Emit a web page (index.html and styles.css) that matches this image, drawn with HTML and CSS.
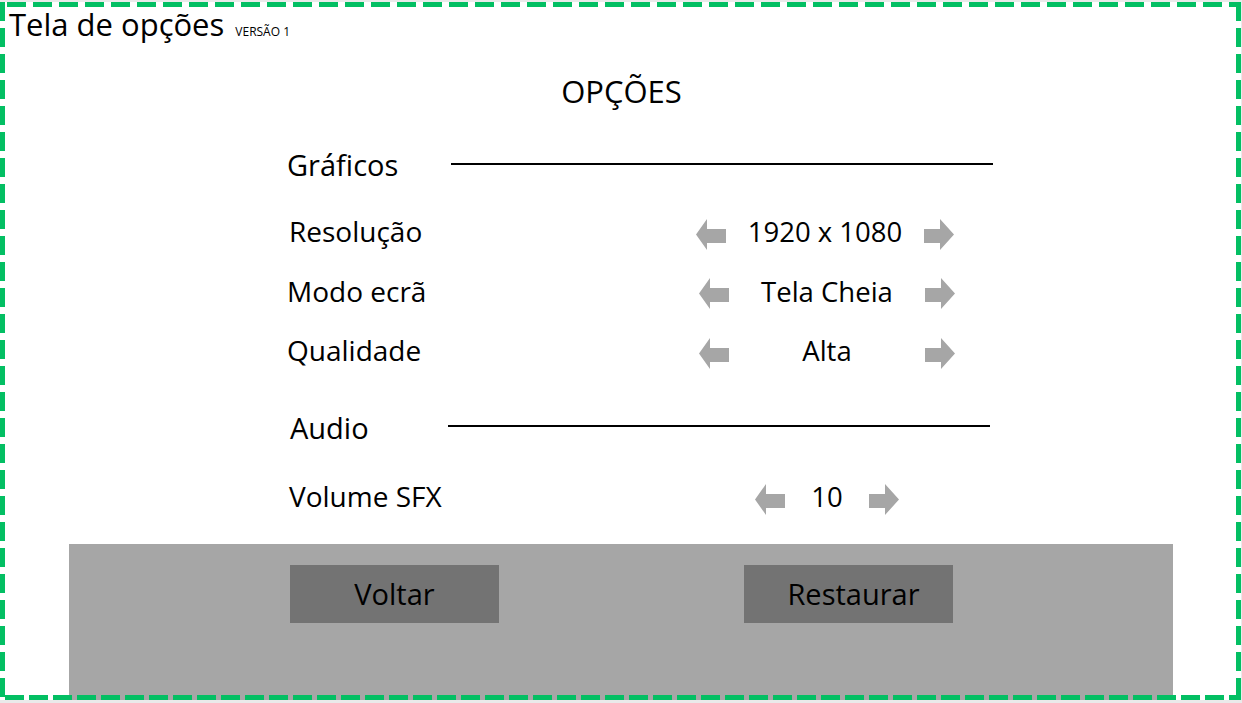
FILE: index.html
```html
<!DOCTYPE html>
<html lang="pt">
<head>
<meta charset="utf-8">
<title>Tela de opções</title>
<link rel="stylesheet" href="styles.css">
</head>
<body>
<div class="frame">
  <header class="header">
    <span class="title">Tela de opções</span>
    <span class="version">VERSÃO 1</span>
  </header>
  <h1 class="heading">OPÇÕES</h1>
  <main class="content">
    <div class="section section--graficos">
      <span class="section-label">Gráficos</span>
      <span class="rule rule--graficos"></span>
    </div>
    <div class="row">
      <span class="label label--res">Resolução</span>
      <div class="control">
        <svg class="arrow" viewBox="0 0 30 31"><polygon points="0,15.5 11,0 11,10 30,10 30,24 11,24 11,31"/></svg>
        <span class="value">1920 x 1080</span>
        <svg class="arrow" viewBox="0 0 30 31"><polygon points="30,15.5 16,0 16,10 0,10 0,24 16,24 16,31"/></svg>
      </div>
    </div>
    <div class="row">
      <span class="label">Modo ecrã</span>
      <div class="control control--shift">
        <svg class="arrow" viewBox="0 0 30 31"><polygon points="0,15.5 11,0 11,10 30,10 30,24 11,24 11,31"/></svg>
        <span class="value">Tela Cheia</span>
        <svg class="arrow" viewBox="0 0 30 31"><polygon points="30,15.5 16,0 16,10 0,10 0,24 16,24 16,31"/></svg>
      </div>
    </div>
    <div class="row">
      <span class="label">Qualidade</span>
      <div class="control control--shift">
        <svg class="arrow" viewBox="0 0 30 31"><polygon points="0,15.5 11,0 11,10 30,10 30,24 11,24 11,31"/></svg>
        <span class="value">Alta</span>
        <svg class="arrow" viewBox="0 0 30 31"><polygon points="30,15.5 16,0 16,10 0,10 0,24 16,24 16,31"/></svg>
      </div>
    </div>
    <div class="section section--audio">
      <span class="section-label section-label--audio">Audio</span>
      <span class="rule rule--audio"></span>
    </div>
    <div class="row row--volume">
      <span class="label label--vol">Volume SFX</span>
      <div class="control control--volume">
        <svg class="arrow" viewBox="0 0 30 31"><polygon points="0,15.5 11,0 11,10 30,10 30,24 11,24 11,31"/></svg>
        <span class="value value--short">10</span>
        <svg class="arrow" viewBox="0 0 30 31"><polygon points="30,15.5 16,0 16,10 0,10 0,24 16,24 16,31"/></svg>
      </div>
    </div>
  </main>
  <footer class="panel">
    <button class="btn">Voltar</button>
    <button class="btn btn--restore">Restaurar</button>
  </footer>
</div>
</body>
</html>
```

FILE: styles.css
```css
html, body {
  margin: 0;
  padding: 0;
  background: #eaeaea;
}

body {
  width: 1242px;
  height: 703px;
  overflow: hidden;
  font-family: "Open Sans", "DejaVu Sans", sans-serif;
  color: #000;
}

.frame {
  position: relative;
  width: 1241px;
  height: 698px;
  margin-top: 2px;
  background: #fff;
  display: flex;
  flex-direction: column;
}

.frame::after {
  content: "";
  position: absolute;
  inset: 0;
  pointer-events: none;
  background:
    repeating-linear-gradient(to right, transparent 0 7px, #03bf63 7px 26px) left top / 100% 5px no-repeat,
    repeating-linear-gradient(to right, transparent 0 5px, #03bf63 5px 24px) left bottom / 100% 5px no-repeat,
    repeating-linear-gradient(to bottom, #03bf63 0 19px, transparent 19px 26px) left top / 5px 100% no-repeat,
    repeating-linear-gradient(to bottom, #03bf63 0 19px, transparent 19px 26px) right top / 5px 100% no-repeat;
}

.header {
  height: 45px;
  display: flex;
  align-items: baseline;
  padding-left: 9px;
  gap: 11px;
  line-height: 45px;
}

.title {
  font-size: 31px;
}

.version {
  font-size: 12px;
}

.heading {
  margin: 0;
  height: 88px;
  line-height: 88px;
  font-size: 31px;
  font-weight: normal;
  text-align: center;
  padding-left: 2px;
}

.content {
  padding-left: 287px;
  padding-top: 3px;
  display: flex;
  flex-direction: column;
}

.section {
  height: 54px;
  display: flex;
  align-items: center;
}

.section--graficos {
  margin-bottom: 10px;
}

.section--audio {
  margin-top: 20.5px;
  margin-bottom: 12px;
}

.section-label {
  width: 164px;
  font-size: 29px;
  line-height: 54px;
}

.section-label--audio {
  width: 161px;
  padding-left: 3px;
  box-sizing: border-box;
}

.rule {
  display: block;
  width: 542px;
  height: 2px;
  background: #000;
}

.rule--graficos {
  margin-top: -2px;
}

.rule--audio {
  margin-top: -4px;
}

.row {
  height: 59.5px;
  display: flex;
  align-items: center;
}

.label {
  width: 408px;
  font-size: 28px;
  line-height: 59.5px;
}

.label--res,
.label--vol {
  padding-left: 2px;
  box-sizing: border-box;
}

.control {
  width: 260px;
  display: flex;
  justify-content: center;
  align-items: center;
}

.control--shift {
  padding-left: 4px;
  box-sizing: border-box;
}

.control--volume {
  padding-left: 4px;
  box-sizing: border-box;
}

.arrow {
  width: 30px;
  height: 31px;
  fill: #a6a6a6;
  margin-top: 5px;
  flex: none;
}

.value {
  width: 198px;
  text-align: center;
  font-size: 27.5px;
  line-height: 59.5px;
}

.value--short {
  width: 84px;
}

.panel {
  margin: 17px 68px 0 69px;
  flex: 1;
  background: #a6a6a6;
  display: flex;
  align-items: flex-start;
  padding: 21px 0 0 221px;
  gap: 245px;
}

.btn {
  width: 209px;
  height: 58px;
  border: none;
  margin: 0;
  padding: 0;
  background: #737373;
  font-family: "Open Sans", "DejaVu Sans", sans-serif;
  font-size: 29px;
  color: #000;
  line-height: 58px;
}

.btn--restore {
  padding-left: 10px;
}
```
